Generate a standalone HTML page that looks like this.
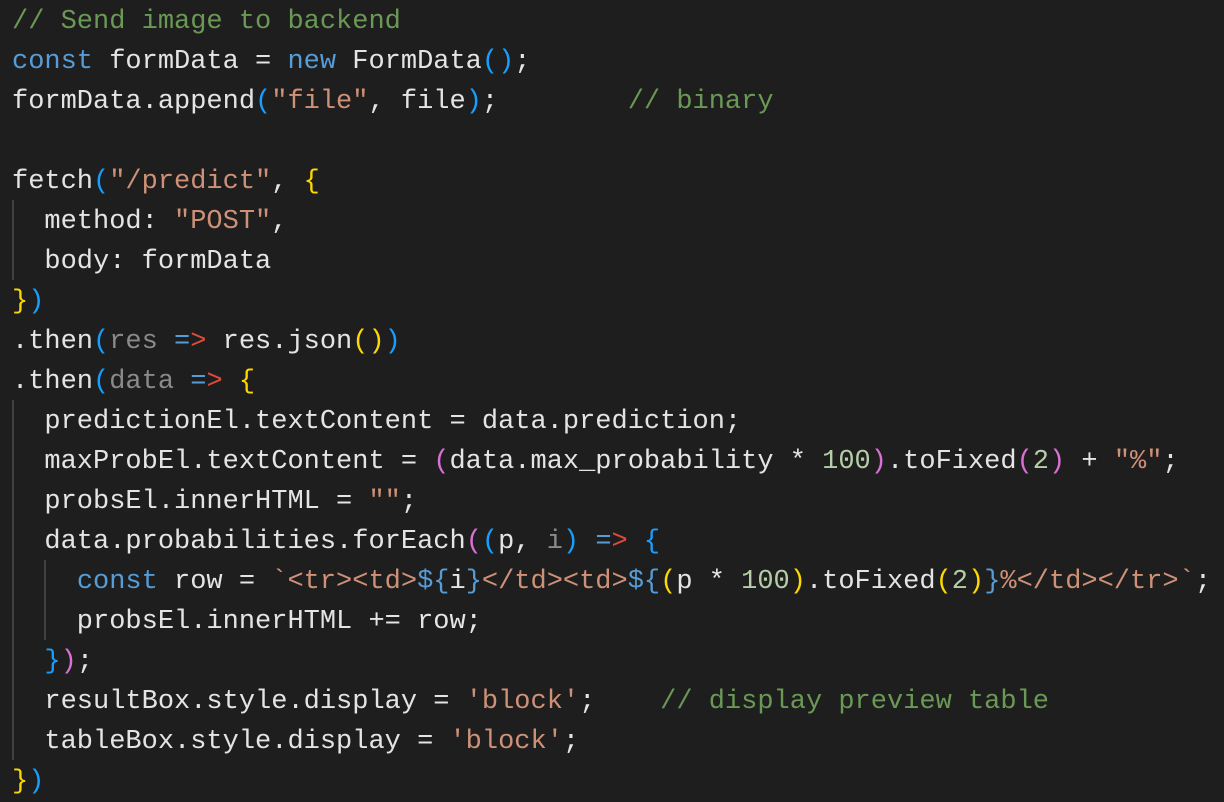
<!DOCTYPE html><html><head><style>
html,body{margin:0;background:#1e1e1e;width:1224px;height:800px;overflow:hidden}
pre{margin:0;position:absolute;left:12px;top:2px;font-family:"Liberation Mono",monospace;font-size:27px;line-height:40px;color:#e4e4e4;white-space:pre}
.c{color:#6a9955}.k{color:#569cd6}.s{color:#ce9178}.n{color:#b5cea8}.g{color:#8a8a8a}
.b{color:#179fff}.y{color:#ffd700}.p{color:#da70d6}.r{color:#e04a3a}
.guide{position:absolute;width:2px;background:#404040}
</style></head><body>
<div class="guide" style="left:12px;top:200px;height:80px"></div>
<div class="guide" style="left:12px;top:400px;height:360px"></div>
<div class="guide" style="left:44px;top:560px;height:80px"></div>
<pre><span class="c">// Send image to backend</span>
<span class="k">const</span> formData = <span class="k">new</span> FormData<span class="b">()</span>;
formData.append<span class="b">(</span><span class="s">"file"</span>, file<span class="b">)</span>;        <span class="c">// binary</span>

fetch<span class="b">(</span><span class="s">"/predict"</span>, <span class="y">{</span>
  method: <span class="s">"POST"</span>,
  body: formData
<span class="y">}</span><span class="b">)</span>
.then<span class="b">(</span><span class="g">res</span> <span class="k">=</span><span class="r">&gt;</span> res.json<span class="y">()</span><span class="b">)</span>
.then<span class="b">(</span><span class="g">data</span> <span class="k">=</span><span class="r">&gt;</span> <span class="y">{</span>
  predictionEl.textContent = data.prediction;
  maxProbEl.textContent = <span class="p">(</span>data.max_probability * <span class="n">100</span><span class="p">)</span>.toFixed<span class="p">(</span><span class="n">2</span><span class="p">)</span> + <span class="s">"%"</span>;
  probsEl.innerHTML = <span class="s">""</span>;
  data.probabilities.forEach<span class="p">(</span><span class="b">(</span>p, <span class="g">i</span><span class="b">)</span> <span class="k">=</span><span class="r">&gt;</span> <span class="b">{</span>
    <span class="k">const</span> row = <span class="s">`&lt;tr&gt;&lt;td&gt;</span><span class="k">${</span>i<span class="k">}</span><span class="s">&lt;/td&gt;&lt;td&gt;</span><span class="k">${</span><span class="y">(</span>p * <span class="n">100</span><span class="y">)</span>.toFixed<span class="y">(</span><span class="n">2</span><span class="y">)</span><span class="k">}</span><span class="s">%&lt;/td&gt;&lt;/tr&gt;`</span>;
    probsEl.innerHTML += row;
  <span class="b">}</span><span class="p">)</span>;
  resultBox.style.display = <span class="s">'block'</span>;    <span class="c">// display preview table</span>
  tableBox.style.display = <span class="s">'block'</span>;
<span class="y">}</span><span class="b">)</span></pre>
</body></html>
